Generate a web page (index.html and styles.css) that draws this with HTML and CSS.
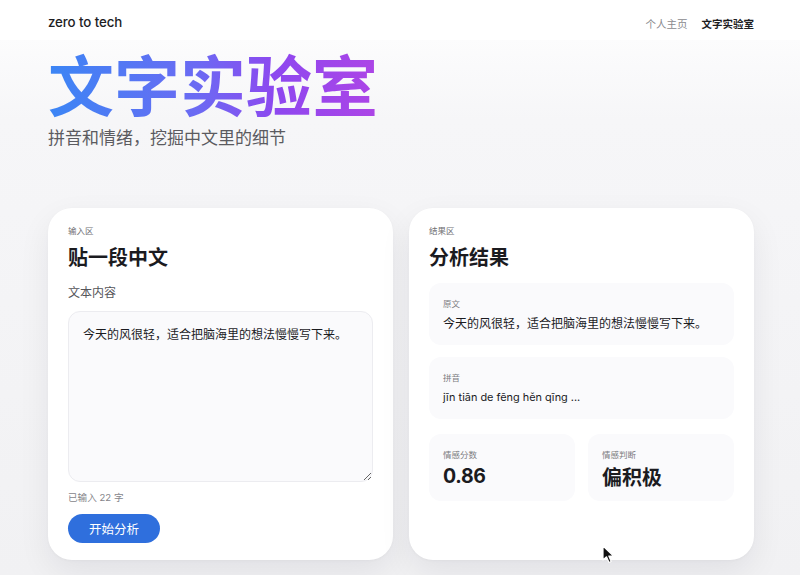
FILE: index.html
```html
<!DOCTYPE html>
<html lang="zh-CN">
<head>
<meta charset="utf-8">
<title>文字实验室</title>
<link rel="stylesheet" href="styles.css">
</head>
<body>
<header class="topbar">
  <div class="brand">zero to tech</div>
  <nav class="nav">
    <a class="nav-link">个人主页</a>
    <a class="nav-link active">文字实验室</a>
  </nav>
</header>
<main class="page">
  <section class="hero">
    <h1 class="hero-title">文字实验室</h1>
    <p class="hero-sub">拼音和情绪，挖掘中文里的细节</p>
  </section>
  <section class="cards">
    <div class="card">
      <div class="eyebrow">输入区</div>
      <h2 class="card-title">贴一段中文</h2>
      <label class="field-label">文本内容</label>
      <textarea class="input">今天的风很轻，适合把脑海里的想法慢慢写下来。</textarea>
      <div class="counter">已输入 22 字</div>
      <div class="actions"><button class="btn">开始分析</button></div>
    </div>
    <div class="card">
      <div class="eyebrow">结果区</div>
      <h2 class="card-title">分析结果</h2>
      <div class="results">
        <div class="box">
          <div class="box-label">原文</div>
          <div class="box-text">今天的风很轻，适合把脑海里的想法慢慢写下来。</div>
        </div>
        <div class="box">
          <div class="box-label">拼音</div>
          <div class="box-text latin">jīn tiān de fēng hěn qīng ...</div>
        </div>
        <div class="stats">
          <div class="box stat">
            <div class="box-label">情感分数</div>
            <div class="stat-value num">0.86</div>
          </div>
          <div class="box stat">
            <div class="box-label">情感判断</div>
            <div class="stat-value">偏积极</div>
          </div>
        </div>
      </div>
    </div>
  </section>
</main>
<svg class="cursor" width="13" height="19" viewBox="0 0 13 19"><path d="M1 1 L1 15 L4.5 11.8 L7 17.5 L9.2 16.5 L6.8 11 L11.5 11 Z" fill="#111" stroke="#fff" stroke-width="1.2" stroke-linejoin="round"/></svg>
</body>
</html>
```
FILE: styles.css
```css
* { box-sizing: border-box; }
html, body { margin: 0; padding: 0; }
body {
  width: 800px;
  height: 575px;
  overflow: hidden;
  font-family: Inter, "Noto Sans CJK SC", sans-serif;
  color: #1b1b1f;
  background: linear-gradient(180deg, #ffffff 0px, #f6f6f8 120px, #f1f1f3 575px);
  position: relative;
}
.topbar {
  height: 40px;
  padding: 0 46px 0 48px;
  display: flex;
  align-items: center;
  justify-content: space-between;
  background: rgba(255,255,255,0.85);
}
.brand {
  font-size: 13.3px;
  font-weight: 500;
  color: #1d1d1f;
  letter-spacing: -0.1px;
  margin-top: 4px;
}
.nav { display: flex; gap: 14px; margin-top: 6px; }
.nav-link {
  font-family: "Noto Sans CJK SC", sans-serif;
  font-size: 10.5px;
  color: #8a8a8e;
}
.nav-link.active { color: #1d1d1f; font-weight: 700; }
.page { padding: 0 46px 0 48px; }
.hero { padding-top: 6px; }
.hero-title {
  margin: 0;
  font-family: "Noto Sans CJK SC", sans-serif;
  font-size: 66px;
  line-height: 72px;
  font-weight: 700;
  display: inline-block;
  background: linear-gradient(90deg, #3b86f5 0%, #6b6af3 45%, #8f47ef 70%, #ad45e6 100%);
  -webkit-background-clip: text;
  background-clip: text;
  color: transparent;
}
.hero-sub {
  margin: 7px 0 0;
  font-family: "Noto Sans CJK SC", sans-serif;
  font-size: 17px;
  line-height: 24px;
  color: #5b5b60;
}
.cards {
  margin-top: 59px;
  display: grid;
  grid-template-columns: 1fr 1fr;
  gap: 16px;
}
.card {
  background: #fff;
  border-radius: 24px;
  padding: 16px 20px 17px;
  box-shadow: 0 12px 32px rgba(20, 20, 40, 0.07), 0 1px 3px rgba(20,20,40,0.03);
  display: flex;
  flex-direction: column;
}
.eyebrow {
  font-family: "Noto Sans CJK SC", sans-serif;
  font-size: 8.5px;
  line-height: 12px;
  color: #6f6f74;
}
.card-title {
  margin: 7px 0 0;
  font-family: "Noto Sans CJK SC", sans-serif;
  font-size: 20px;
  line-height: 28px;
  font-weight: 700;
  color: #1b1b1f;
}
.field-label {
  margin-top: 12px;
  font-family: "Noto Sans CJK SC", sans-serif;
  font-size: 12px;
  line-height: 18px;
  color: #55555a;
}
.input {
  margin-top: 10px;
  height: 171px;
  width: 100%;
  resize: vertical;
  border: 1px solid #ececf0;
  border-radius: 12px;
  background: #fafafc;
  padding: 13px 14px;
  font-family: "Noto Sans CJK SC", sans-serif;
  font-size: 12px;
  line-height: 18px;
  color: #1b1b1f;
  outline: none;
}
.counter {
  margin-top: 8px;
  font-family: Inter, "Noto Sans CJK SC", sans-serif;
  font-size: 9.6px;
  line-height: 15px;
  color: #86868b;
}
.actions { margin-top: 9px; }
.btn {
  width: 92px;
  height: 29px;
  border: none;
  border-radius: 15px;
  background: #2f6fdd;
  color: #fff;
  font-family: "Noto Sans CJK SC", sans-serif;
  font-size: 12.5px;
  padding: 0;
}
.results {
  margin-top: 12px;
  display: flex;
  flex-direction: column;
  gap: 12px;
}
.box {
  background: #fafafc;
  border-radius: 12px;
  padding: 14px 14px 13px;
}
.box-label {
  font-family: "Noto Sans CJK SC", sans-serif;
  font-size: 8.5px;
  line-height: 12px;
  color: #7c7c81;
}
.box-text {
  margin-top: 5px;
  font-family: "Noto Sans CJK SC", sans-serif;
  font-size: 12px;
  line-height: 18px;
  color: #1b1b1f;
}
.box-text.latin { font-family: Inter, "Noto Sans CJK SC", sans-serif; font-size: 10.9px; }
.stats {
  margin-top: 3px;
  display: grid;
  grid-template-columns: 1fr 1fr;
  gap: 13px;
}
.stat { padding: 14px 14px 11px; }
.stat-value {
  margin-top: 3px;
  font-family: "Noto Sans CJK SC", sans-serif;
  font-size: 20px;
  line-height: 27px;
  font-weight: 700;
  color: #1b1b1f;
}
.stat-value.num {
  font-family: Inter, "Noto Sans CJK SC", sans-serif;
  font-size: 19.5px;
  letter-spacing: -0.3px;
}
.cursor {
  position: absolute;
  left: 602px;
  top: 545px;
}
```
